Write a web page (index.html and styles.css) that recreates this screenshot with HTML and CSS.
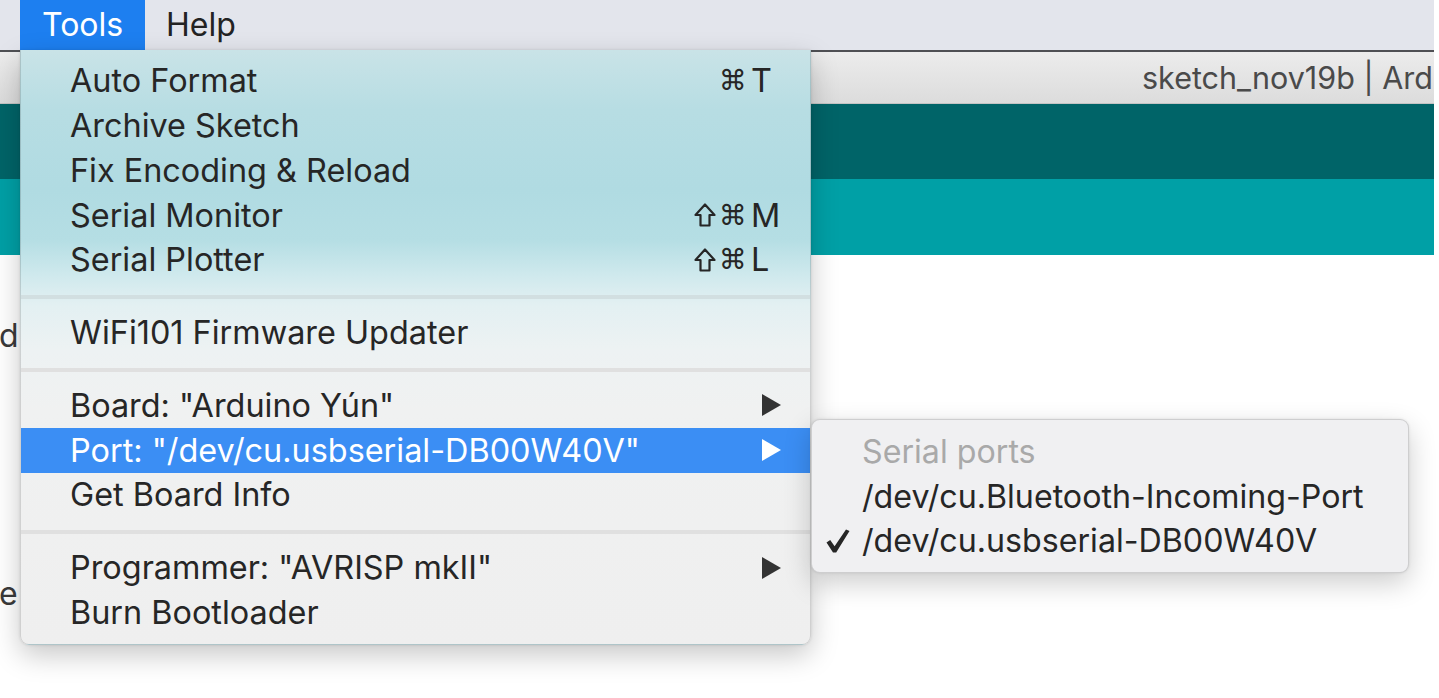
FILE: index.html
```html
<!DOCTYPE html>
<html>
<head>
<meta charset="utf-8">
<link rel="stylesheet" href="styles.css">
</head>
<body>
<div class="screen">
  <div class="menubar">
    <span class="mb-item active">Tools</span>
    <span class="mb-item">Help</span>
  </div>
  <div class="window">
    <div class="titlebar"><span class="title">sketch_nov19b | Ard</span></div>
    <div class="toolbar"></div>
    <div class="tabs"></div>
    <div class="editor">
      <div class="code-line first">d</div>
      <div class="code-line second">e</div>
    </div>
  </div>

  <div class="menu">
    <div class="row"><span class="label">Auto Format</span><span class="shortcut"><span class="mods">⌘</span><span class="key">T</span></span></div>
    <div class="row"><span class="label">Archive Sketch</span></div>
    <div class="row"><span class="label">Fix Encoding &amp; Reload</span></div>
    <div class="row"><span class="label">Serial Monitor</span><span class="shortcut"><svg class="shift" viewBox="0 0 22 24"><path d="M11 1.5 L20.5 12 L15.5 12 L15.5 22.5 L6.5 22.5 L6.5 12 L1.5 12 Z"/></svg><span class="mods">⌘</span><span class="key">M</span></span></div>
    <div class="row"><span class="label">Serial Plotter</span><span class="shortcut"><svg class="shift" viewBox="0 0 22 24"><path d="M11 1.5 L20.5 12 L15.5 12 L15.5 22.5 L6.5 22.5 L6.5 12 L1.5 12 Z"/></svg><span class="mods">⌘</span><span class="key">L</span></span></div>
    <div class="sep upper"></div>
    <div class="row"><span class="label">WiFi101 Firmware Updater</span></div>
    <div class="sep"></div>
    <div class="row"><span class="label">Board: "Arduino Yún"</span><svg class="arrow" viewBox="0 0 20 22"><path d="M1 0 L20 11 L1 22 Z"/></svg></div>
    <div class="row selected"><span class="label">Port: "/dev/cu.usbserial-DB00W40V"</span><svg class="arrow" viewBox="0 0 20 22"><path d="M1 0 L20 11 L1 22 Z"/></svg></div>
    <div class="row"><span class="label">Get Board Info</span></div>
    <div class="sep"></div>
    <div class="row"><span class="label">Programmer: "AVRISP mkII"</span><svg class="arrow" viewBox="0 0 20 22"><path d="M1 0 L20 11 L1 22 Z"/></svg></div>
    <div class="row"><span class="label">Burn Bootloader</span></div>
  </div>

  <div class="submenu">
    <div class="subrow header"><span class="check"></span><span>Serial ports</span></div>
    <div class="subrow"><span class="check"></span><span>/dev/cu.Bluetooth-Incoming-Port</span></div>
    <div class="subrow"><span class="check"><svg viewBox="0 0 24 24"><path d="M0.5 13.5 L4.2 11 L8.6 17.2 L20 0.5 L23.5 2 L10.2 23.5 L7 23.5 Z"/></svg></span><span>/dev/cu.usbserial-DB00W40V</span></div>
  </div>
</div>
</body>
</html>
```

FILE: styles.css
```css
html, body {
  margin: 0;
  padding: 0;
  background: #ffffff;
}

body {
  width: 1439px;
  height: 698px;
  overflow: hidden;
  font-family: Inter, "Noto Sans", "DejaVu Sans", sans-serif;
  color: #262626;
}

.screen {
  position: relative;
  width: 1439px;
  height: 698px;
  overflow: hidden;
  background: #ffffff;
}

/* ---- system menu bar ---- */
.menubar {
  width: 1434px;
  box-sizing: border-box;
  height: 50px;
  background: #e3e5ec;
  display: flex;
  align-items: stretch;
  padding-left: 20px;
  font-size: 32px;
}

.mb-item {
  display: flex;
  align-items: center;
  padding: 0 21px 2px 21px;
  color: #232323;
}

.mb-item.active {
  background: #1d7ff0;
  color: #ffffff;
  width: 125px;
  box-sizing: border-box;
  padding-left: 22px;
}

/* ---- Arduino window ---- */
.window {
  width: 1434px;
  border-top: 2px solid #4f5054;
  overflow: hidden;
}

.titlebar {
  height: 52px;
  background: linear-gradient(#ececec, #dcdcdc);
  border-bottom: 1px solid #c4c4c4;
  box-sizing: border-box;
  display: flex;
  align-items: center;
  padding-left: 1142px;
  white-space: nowrap;
  overflow: hidden;
}

.title {
  font-size: 30.5px;
  color: #4a4a4a;
}

.toolbar {
  height: 75px;
  background: #006468;
}

.tabs {
  height: 76px;
  background: #00a0a6;
}

.editor {
  height: 415px;
  background: #ffffff;
  font-size: 32px;
  color: #3a3a3a;
  padding-top: 59px;
  box-sizing: border-box;
}

.code-line {
  height: 44px;
  line-height: 44px;
  text-indent: -1px;
}

.code-line.second {
  margin-top: 214px;
}

/* ---- Tools menu ---- */
.menu {
  position: absolute;
  left: 20px;
  top: 50px;
  width: 791px;
  height: 595px;
  box-sizing: border-box;
  padding: 8.5px 23px 10px 49px;
  border-radius: 0 0 9px 9px;
  border: 1px solid rgba(0, 0, 0, 0.13);
  border-top: none;
  background: linear-gradient(180deg,
    #c9e3e7 0px,
    #b7dde3 60px,
    #b0dbe2 140px,
    #b5dee4 190px,
    #cfe9ed 225px,
    #e3f0f2 255px,
    #edf2f3 300px,
    #f0f1f1 360px,
    #efefef 595px);
  box-shadow: 0 10px 28px rgba(0, 0, 0, 0.22), 0 0 3px rgba(0, 0, 0, 0.12);
  font-size: 32.4px;
}

.row {
  height: 44.75px;
  display: flex;
  align-items: center;
  white-space: nowrap;
}

.row .label {
  flex: 1;
}

.row.selected {
  background: #3b8ef4;
  color: #ffffff;
  margin: 0 -23px 0 -49px;
  padding: 0 23px 0 49px;
}

.shortcut {
  display: flex;
  align-items: center;
}

.shift {
  width: 22px;
  height: 24px;
  margin-right: 3px;
  fill: none;
  stroke: #262626;
  stroke-width: 2.2;
  stroke-linejoin: round;
}

.mods {
  text-align: right;
  font-family: "DejaVu Sans", sans-serif;
  font-size: 28px;
}

.key {
  width: 36px;
  margin-left: 4px;
}

.arrow {
  width: 20px;
  height: 22px;
  margin-right: 6px;
  fill: #333333;
}

.row.selected .arrow {
  fill: #ffffff;
}

.sep {
  height: 4px;
  margin: 13px -23px 11px -49px;
  background: #e0e0e0;
}

.sep.upper {
  background: #d2dfe1;
}

/* ---- Port submenu ---- */
.submenu {
  position: absolute;
  left: 811px;
  top: 419px;
  width: 598px;
  height: 154px;
  box-sizing: border-box;
  padding: 9px 0 10px 14px;
  border-radius: 9px;
  border: 1px solid rgba(0, 0, 0, 0.14);
  background: #f0f0f2;
  box-shadow: 0 10px 28px rgba(0, 0, 0, 0.2), 0 0 3px rgba(0, 0, 0, 0.1);
  font-size: 32.2px;
}

.subrow {
  height: 44.75px;
  display: flex;
  align-items: center;
  white-space: nowrap;
}

.subrow.header {
  color: #a9a9a9;
}

.check {
  width: 24px;
  height: 24px;
  margin-right: 12px;
  display: flex;
}

.check svg {
  width: 24px;
  height: 24px;
  fill: #262626;
}
```
